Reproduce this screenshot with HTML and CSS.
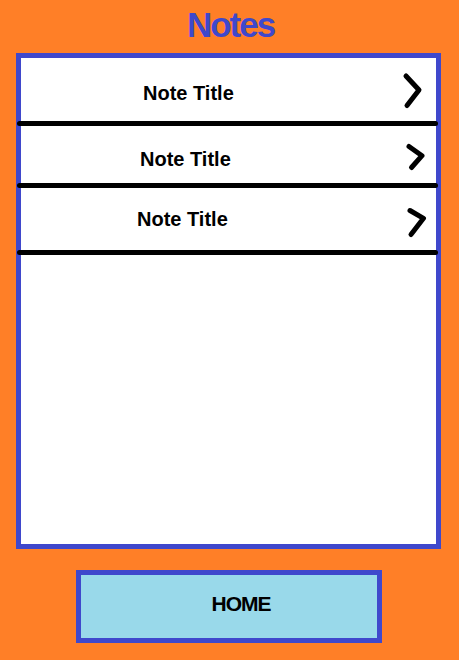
FILE: index.html
```html
<!DOCTYPE html>
<html lang="en">
<head>
<meta charset="utf-8">
<title>Notes</title>
<link rel="stylesheet" href="styles.css">
</head>
<body>
<div class="page">
  <h1 class="title">Notes</h1>
  <div class="panel">
    <div class="row row-1">
      <span class="note-title">Note Title</span>
      <svg class="chev" width="40" height="44" viewBox="0 0 40 44"><polyline points="10,8 23,22 11,37.5"/></svg>
    </div>
    <div class="sep"></div>
    <div class="row row-2">
      <span class="note-title">Note Title</span>
      <svg class="chev" width="40" height="36" viewBox="0 0 40 36"><polyline points="13,6.5 26,15.7 15.5,27.5"/></svg>
    </div>
    <div class="sep"></div>
    <div class="row row-3">
      <span class="note-title">Note Title</span>
      <svg class="chev" width="40" height="36" viewBox="0 0 40 36"><polyline points="14,6.5 27.5,14.3 15,30.5"/></svg>
    </div>
    <div class="sep"></div>
  </div>
  <div class="home-wrap">
    <button class="home">HOME</button>
  </div>
</div>
</body>
</html>
```

FILE: styles.css
```css
html, body {
  margin: 0;
  padding: 0;
}
body {
  background: #ff7f27;
  font-family: "Liberation Sans", Arial, sans-serif;
  width: 459px;
  height: 660px;
  overflow: hidden;
}
.page {
  display: flex;
  flex-direction: column;
}
.title {
  margin: 0;
  height: 53px;
  box-sizing: border-box;
  padding-top: 5px;
  text-align: center;
  font-size: 35px;
  line-height: normal;
  font-weight: bold;
  letter-spacing: -2px;
  color: #3f48cc;
  padding-left: 2px;
}
.panel {
  margin-left: 16px;
  width: 425px;
  height: 496px;
  box-sizing: border-box;
  border: 5px solid #3f48cc;
  background: #fff;
  display: flex;
  flex-direction: column;
}
.row {
  display: flex;
  align-items: flex-start;
}
.note-title {
  font-size: 20px;
  font-weight: bold;
  color: #000;
  line-height: normal;
}
.chev {
  margin-left: auto;
  display: block;
}
.chev polyline {
  fill: none;
  stroke: #000;
  stroke-width: 5;
  stroke-linecap: round;
  stroke-linejoin: round;
}
.row-1 { height: 63px; padding-left: 122px; }
.row-1 .note-title { margin-top: 24px; }
.row-1 .chev { margin-top: 10px; }
.row-2 { height: 57px; padding-left: 119px; }
.row-2 .note-title { margin-top: 22px; }
.row-2 .chev { margin-top: 14px; }
.row-3 { height: 62px; padding-left: 116px; }
.row-3 .note-title { margin-top: 20px; }
.row-3 .chev { margin-top: 16px; }
.sep {
  height: 5px;
  background: #000;
  border-radius: 3px;
  margin: 0 -2px 0 -4px;
}
.home-wrap {
  padding-top: 21px;
  padding-left: 76px;
}
.home {
  width: 306px;
  height: 73px;
  box-sizing: border-box;
  border: 5px solid #3f48cc;
  background: #99d9ea;
  font-family: "Liberation Sans", Arial, sans-serif;
  font-size: 21px;
  font-weight: bold;
  letter-spacing: -1px;
  color: #000;
  padding: 0 0 6px 24px;
  margin: 0;
  display: flex;
  align-items: center;
  justify-content: center;
}
```
